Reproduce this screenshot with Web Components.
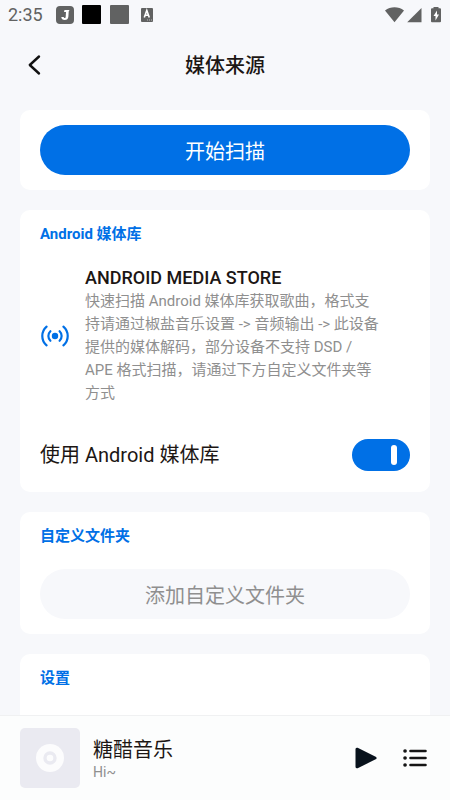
<!DOCTYPE html>
<html lang="zh-CN">
<head>
<meta charset="utf-8">
<meta name="viewport" content="width=device-width, initial-scale=1">
<title>媒体来源</title>
<style>
:root {
  --accent: #0070e6;
  --page: #f7f8fb;
  --card: #ffffff;
  --ink: #1c1614;
  --muted: #8f8f8f;
}
body {
  margin: 0;
  background: var(--page);
  color: var(--ink);
  font-family: Roboto, "Noto Sans CJK SC", sans-serif;
}
</style>
</head>
<body>
<media-source-page></media-source-page>
<script>
class BaseElement extends HTMLElement {
  constructor() {
    super();
    const t = document.createElement('template');
    t.innerHTML = '<style>*{box-sizing:border-box}:host{box-sizing:border-box}</style>' + this.constructor.markup;
    this.attachShadow({ mode: 'open' }).append(t.content.cloneNode(true));
  }
}

customElements.define('status-bar', class extends BaseElement {
  static markup = `
    <style>
      :host { display: flex; align-items: center; height: 30px; padding: 0 8px; color: #616262; }
      time { font-size: 18px; line-height: 32px; }
      .left { display: flex; align-items: center; margin-left: 13px; flex: 1; }
      svg { display: block; }
    </style>
    <time>2:35</time>
    <div class="left">
      <svg width="100" height="20" viewBox="0 0 100 20" aria-hidden="true">
        <rect x="0" y="1" width="18" height="18" rx="4" fill="#616262"/>
        <path d="M8.500 5h5l-.8 1.600-.3 4.800c-.2 2.300-1.500 3.600-3.700 3.600C6.600 15 5.300 13.800 5.300 12h2.400c.1.700.400 1 1 1 .700 0 .9-.5 1-1.300l.3-4.700H8z" fill="#fff"/>
        <rect x="26" y="0" width="19" height="19" rx="1" fill="#000"/>
        <rect x="54" y="0" width="19" height="19" rx="1" fill="#616262"/>
        <rect x="85" y="3" width="12" height="14" rx="1" fill="#616262"/>
        <path d="M88.300 12.500l2.500-7 2.500 7M89.500 10.300h3" fill="none" stroke="#fff" stroke-width="1.600"/>
        <path d="M91 15h5" stroke="#bbb" stroke-dasharray="1 1"/>
      </svg>
    </div>
    <svg width="58" height="20" viewBox="0 0 58 20" aria-hidden="true">
      <path d="M1 5.600C6.500 1.200 14.500 1.200 20 5.600L10.500 17.300z" fill="#616262"/>
      <path d="M37.500 3v14.300H23.200z" fill="#616262"/>
      <path d="M49.500 2h5v1.300H56q1 0 1 1v12q0 1-1 1h-8q-1 0-1-1v-12q0-1 1-1h1.500z" fill="#616262"/>
      <path d="M53 5.500l-3.500 5.500h2v4.500l3.500-6h-2z" fill="#fff"/>
    </svg>`;
});

customElements.define('page-header', class extends BaseElement {
  static markup = `
    <style>
      :host { display: grid; grid-template-columns: 40px 1fr 40px; align-items: center; height: 70px; padding: 0 15px; }
      button { width: 40px; height: 40px; padding: 0; border: 0; background: none; color: inherit; display: grid; place-items: center; }
      h1 { margin: 0; padding-top: 2px; font-size: 20px; line-height: 30px; font-weight: 500; text-align: center; }
    </style>
    <button aria-label="返回">
      <svg width="20" height="24" viewBox="0 0 20 24" fill="none" stroke="#111" stroke-width="2.400" stroke-linecap="round" stroke-linejoin="round"><path d="M14 3.500L4.800 12l9.200 8.500"/></svg>
    </button>
    <h1><slot></slot></h1>`;
});

customElements.define('setting-card', class extends BaseElement {
  static markup = `
    <style>
      :host { display: block; padding: 12px 20px 15px; background: var(--card); border-radius: 10px; }
      :host([plain]) { padding-top: 15px; }
      :host([plain]) h2 { display: none; }
      h2 { margin: 0; color: var(--accent); font-size: 15px; line-height: 24px; font-weight: 700; }
    </style>
    <h2><slot name="title"></slot></h2>
    <slot></slot>`;
});

customElements.define('pill-button', class extends BaseElement {
  static markup = `
    <style>
      :host { display: block; }
      button { display: block; width: 100%; height: 50px; padding: 3px 0 0; border: 0; border-radius: 25px; font: inherit; font-size: 20px; line-height: 30px; color: var(--muted); background: var(--page); }
      :host([primary]) button { color: #fff; background: var(--accent); }
    </style>
    <button><slot></slot></button>`;
});

customElements.define('media-option', class extends BaseElement {
  static markup = `
    <style>
      :host { display: grid; grid-template-columns: 30px 1fr; column-gap: 15px; align-items: center; padding: 20px 30px 20px 0; }
      h3 { margin: 0; font-size: 18px; line-height: 24px; font-weight: 500; }
      p { margin: 0; font-size: 15px; line-height: 23px; color: var(--muted); }
    </style>
    <svg width="30" height="30" viewBox="0 0 30 30" fill="none" stroke="#0070e6" stroke-width="2.200" stroke-linecap="round" aria-hidden="true">
      <circle cx="15" cy="15" r="3.200" fill="#0070e6" stroke="none"/>
      <path d="M10.400 10.200a6.700 6.700 0 0 0 0 9.600M19.600 10.200a6.700 6.700 0 0 1 0 9.600M6.600 5.600a12.400 12.400 0 0 0 0 18.800M23.400 5.600a12.400 12.400 0 0 1 0 18.800"/>
    </svg>
    <div>
      <h3><slot name="title"></slot></h3>
      <p><slot></slot></p>
    </div>`;
});

customElements.define('toggle-row', class extends BaseElement {
  static markup = `
    <style>
      :host { display: block; padding: 14px 0 6px; }
      label { display: flex; align-items: center; justify-content: space-between; font-size: 20px; line-height: 32px; }
      input { appearance: none; display: flex; align-items: center; justify-content: flex-end; width: 58px; height: 32px; margin: 0; padding: 0 13px; border-radius: 16px; background: var(--accent); }
      input::before { content: ""; width: 6px; height: 20px; border-radius: 3px; background: #fff; }
      input:not(:checked) { justify-content: flex-start; background: #d5d7dc; }
    </style>
    <label><span><slot></slot></span><input type="checkbox" role="switch" checked></label>`;
});

customElements.define('mini-player', class extends BaseElement {
  static markup = `
    <style>
      :host { display: flex; align-items: center; height: 85px; padding: 0 20px; background: #fcfdfd; border-top: 1px solid #f0f1f2; }
      .cover { display: grid; place-items: center; width: 60px; height: 60px; border-radius: 5px; background: #eaeaf1; }
      .text { flex: 1; min-width: 0; padding: 2px 0 0 13px; }
      .title { font-size: 20px; line-height: 26px; }
      .artist { font-size: 14px; line-height: 18px; color: var(--muted); }
      .controls { display: flex; gap: 19px; }
      button { width: 30px; height: 30px; padding: 0; border: 0; background: none; display: grid; place-items: center; }
    </style>
    <div class="cover">
      <svg width="30" height="30" viewBox="0 0 30 30" aria-hidden="true">
        <circle cx="15" cy="15" r="14" fill="#fcfcfd"/>
        <circle cx="15" cy="15" r="5" fill="none" stroke="#eaeaf1" stroke-width="3.400"/>
      </svg>
    </div>
    <div class="text">
      <div class="title"><slot name="title"></slot></div>
      <div class="artist"><slot name="artist"></slot></div>
    </div>
    <div class="controls">
      <button aria-label="播放">
        <svg width="30" height="30" viewBox="0 0 30 30"><path d="M6 6.200v17.600L24 15z" fill="#08121c" stroke="#08121c" stroke-width="3" stroke-linejoin="round"/></svg>
      </button>
      <button aria-label="播放列表">
        <svg width="30" height="30" viewBox="0 0 30 30" stroke="#151515" stroke-width="2.600" stroke-linecap="round"><path d="M10.500 8h15M10.500 15h15M10.500 22h15"/><path d="M5 8h.1M5 15h.1M5 22h.1" stroke-width="3.600"/></svg>
      </button>
    </div>`;
});

customElements.define('media-source-page', class extends BaseElement {
  static markup = `
    <style>
      :host { display: flex; flex-direction: column; height: 100vh; }
      main { flex: 1; min-height: 0; overflow-y: auto; scrollbar-width: none; display: flex; flex-direction: column; gap: 20px; padding: 10px 20px 0; }
      setting-card { flex: none; }
      .folder { margin-top: 21px; }
      .more { min-height: 80px; }
    </style>
    <status-bar></status-bar>
    <page-header>媒体来源</page-header>
    <main>
      <setting-card plain><pill-button primary>开始扫描</pill-button></setting-card>
      <setting-card>
        <span slot="title">Android 媒体库</span>
        <media-option>
          <span slot="title">ANDROID MEDIA STORE</span>
          快速扫描 Android 媒体库获取歌曲，格式支持请通过椒盐音乐设置 -&gt; 音频输出 -&gt; 此设备提供的媒体解码，部分设备不支持 DSD / APE 格式扫描，请通过下方自定义文件夹等方式
        </media-option>
        <toggle-row>使用 Android 媒体库</toggle-row>
      </setting-card>
      <setting-card>
        <span slot="title">自定义文件夹</span>
        <pill-button class="folder">添加自定义文件夹</pill-button>
      </setting-card>
      <setting-card class="more">
        <span slot="title">设置</span>
      </setting-card>
    </main>
    <mini-player>
      <span slot="title">糖醋音乐</span>
      <span slot="artist">Hi~</span>
    </mini-player>`;
});
</script>
</body>
</html>
